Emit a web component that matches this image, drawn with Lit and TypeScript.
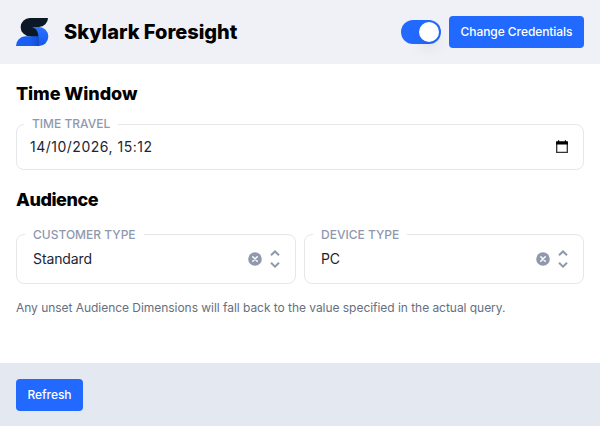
import { LitElement, html, css, svg } from "lit";
import { customElement, property } from "lit/decorators.js";

const FONT = css`"Inter", "Liberation Sans", sans-serif`;

@customElement("field-box")
class FieldBox extends LitElement {
  @property() label = "";

  static styles = css`
    :host {
      display: block;
      min-width: 0;
    }
    .box {
      position: relative;
      box-sizing: border-box;
      height: 100%;
      border: 1px solid #e5e7eb;
      border-radius: 8px;
      display: flex;
      align-items: center;
    }
    .label {
      position: absolute;
      top: var(--label-top, -8px);
      left: var(--label-left, 8px);
      padding: 0 8px;
      background: #fff;
      color: #8f98ad;
      font: 500 12px/16px ${FONT};
      white-space: nowrap;
    }
  `;

  render() {
    return html`<div class="box">
      <span class="label">${this.label}</span>
      <slot></slot>
    </div>`;
  }
}

@customElement("select-field")
class SelectField extends LitElement {
  @property() label = "";
  @property() value = "";

  static styles = css`
    :host {
      display: block;
      flex: 1;
    }
    field-box {
      height: 50px;
    }
    .value {
      flex: 1;
      padding-left: 16px;
      color: #1b2633;
      font: 400 14px/20px ${FONT};
      letter-spacing: -0.1px;
    }
    svg {
      display: block;
      flex: none;
    }
    .clear {
      margin-right: 7px;
    }
    .arrows {
      margin-right: 14px;
    }
  `;

  render() {
    return html`<field-box label=${this.label}>
      <span class="value">${this.value}</span>
      <svg class="clear" width="14" height="14" viewBox="0 0 14 14">
        <circle cx="7" cy="7" r="6.8" fill="#8f98ad" />
        <path d="M4.8 4.8l4.4 4.4M9.2 4.8L4.8 9.2" stroke="#fff" stroke-width="1.5" stroke-linecap="round" />
      </svg>
      <svg class="arrows" width="12" height="20" viewBox="0 0 12 20" fill="none" stroke="#8f98ad" stroke-width="2">
        <path d="M2 6.2L6 2.4L10 6.2M2 13.8L6 17.6L10 13.8" />
      </svg>
    </field-box>`;
  }
}

const logo = svg`
  <defs>
    <linearGradient id="ribbon" x1="0" y1="0" x2="0" y2="1">
      <stop offset="0" stop-color="#2b74ff" />
      <stop offset="1" stop-color="#1557ee" />
    </linearGradient>
    <linearGradient id="fold" x1="0" y1="0" x2="1" y2="0">
      <stop offset="0.3" stop-color="#0b3fb8" stop-opacity="0" />
      <stop offset="1" stop-color="#0b3290" stop-opacity="0.42" />
    </linearGradient>
  </defs>
  <path d="M14 9H23A9.300 9.500 0 0 1 23 28H16Z" fill="url(#ribbon)" />
  <path d="M0 28A9.500 9.500 0 0 1 9.500 18.300H23V28Z" fill="#195ff5" />
  <path d="M9.500 18.300H23V28H9.500Z" fill="url(#fold)" />
  <path d="M32 0A9 9 0 0 1 23 9H15C19.500 9.500 22.300 13 22.300 18.300H13.800A9.150 9.150 0 0 1 13.800 0Z" fill="#0d1826" />
`;

@customElement("app-root")
class AppRoot extends LitElement {
  static styles = css`
    :host {
      display: flex;
      flex-direction: column;
      height: 100vh;
      background: #fff;
      color: #000;
      font-family: ${FONT};
    }
    header {
      box-sizing: border-box;
      height: 64px;
      padding: 0 16px;
      display: flex;
      align-items: center;
      background: #f0f1f6;
    }
    .logo {
      display: block;
      overflow: visible;
    }
    h1,
    h2,
    p {
      margin: 0;
    }
    h1 {
      flex: 1;
      margin-left: 16px;
      font-size: 20px;
      line-height: 28px;
      font-weight: 800;
      letter-spacing: -0.02px;
    }
    .toggle {
      box-sizing: border-box;
      width: 40px;
      height: 24px;
      padding: 2px;
      margin-right: 8px;
      border: 0;
      border-radius: 12px;
      background: #226aff;
      display: flex;
      justify-content: flex-end;
    }
    .knob {
      width: 20px;
      height: 20px;
      border-radius: 50%;
      background: #fff;
      box-shadow: 0 10px 15px -3px rgba(0, 0, 0, 0.1), 0 4px 6px -4px rgba(0, 0, 0, 0.1);
    }
    .button {
      height: 32px;
      padding: 0;
      border: 0;
      border-radius: 4px;
      background: #226aff;
      color: #fff;
      font: 500 12px/16px ${FONT};
      letter-spacing: -0.07px;
      white-space: nowrap;
    }
    .change {
      width: 135px;
    }
    .refresh {
      width: 67px;
    }
    main {
      flex: 1;
      padding: 16px 16px 0;
    }
    h2 {
      font-size: 18px;
      line-height: 28px;
      font-weight: 800;
      letter-spacing: -0.08px;
    }
    h2.audience {
      letter-spacing: -0.45px;
    }
    .time {
      height: 46px;
      margin: 16px 0;
      --label-left: 7px;
      --label-top: -9px;
    }
    .date {
      flex: 1;
      padding-left: 13px;
      color: #1b2633;
      font-size: 14px;
      line-height: 20px;
      letter-spacing: 0.5px;
    }
    .calendar {
      margin-right: 14px;
    }
    .row {
      display: flex;
      gap: 8px;
      margin: 20px 0 16px;
    }
    p {
      color: #666f80;
      font-size: 12px;
      line-height: 16px;
      letter-spacing: -0.04px;
    }
    footer {
      box-sizing: border-box;
      height: 63px;
      padding: 0 16px;
      display: flex;
      align-items: center;
      background: #e4e8f1;
    }
  `;

  render() {
    return html`
      <header>
        <svg class="logo" width="32" height="28" viewBox="0 0 32 28">${logo}</svg>
        <h1>Skylark Foresight</h1>
        <button class="toggle" role="switch" aria-checked="true" aria-label="Enabled"><span class="knob"></span></button>
        <button class="button change">Change Credentials</button>
      </header>
      <main>
        <h2>Time Window</h2>
        <field-box class="time" label="TIME TRAVEL">
          <span class="date">14/10/2026, 15:12</span>
          <svg class="calendar" width="14" height="14" viewBox="0 0 14 14">
            <path d="M1.700 2V12.300H12.300V2" fill="none" stroke="#333" stroke-width="1.300" />
            <path d="M1.100 1.200H12.900V4.500H1.100ZM3 0.200H4.200V2H3ZM9.800 0.200H11V2H9.800Z" fill="#000" />
          </svg>
        </field-box>
        <h2 class="audience">Audience</h2>
        <div class="row">
          <select-field label="CUSTOMER TYPE" value="Standard"></select-field>
          <select-field label="DEVICE TYPE" value="PC"></select-field>
        </div>
        <p>Any unset Audience Dimensions will fall back to the value specified in the actual query.</p>
      </main>
      <footer><button class="button refresh">Refresh</button></footer>
    `;
  }
}
